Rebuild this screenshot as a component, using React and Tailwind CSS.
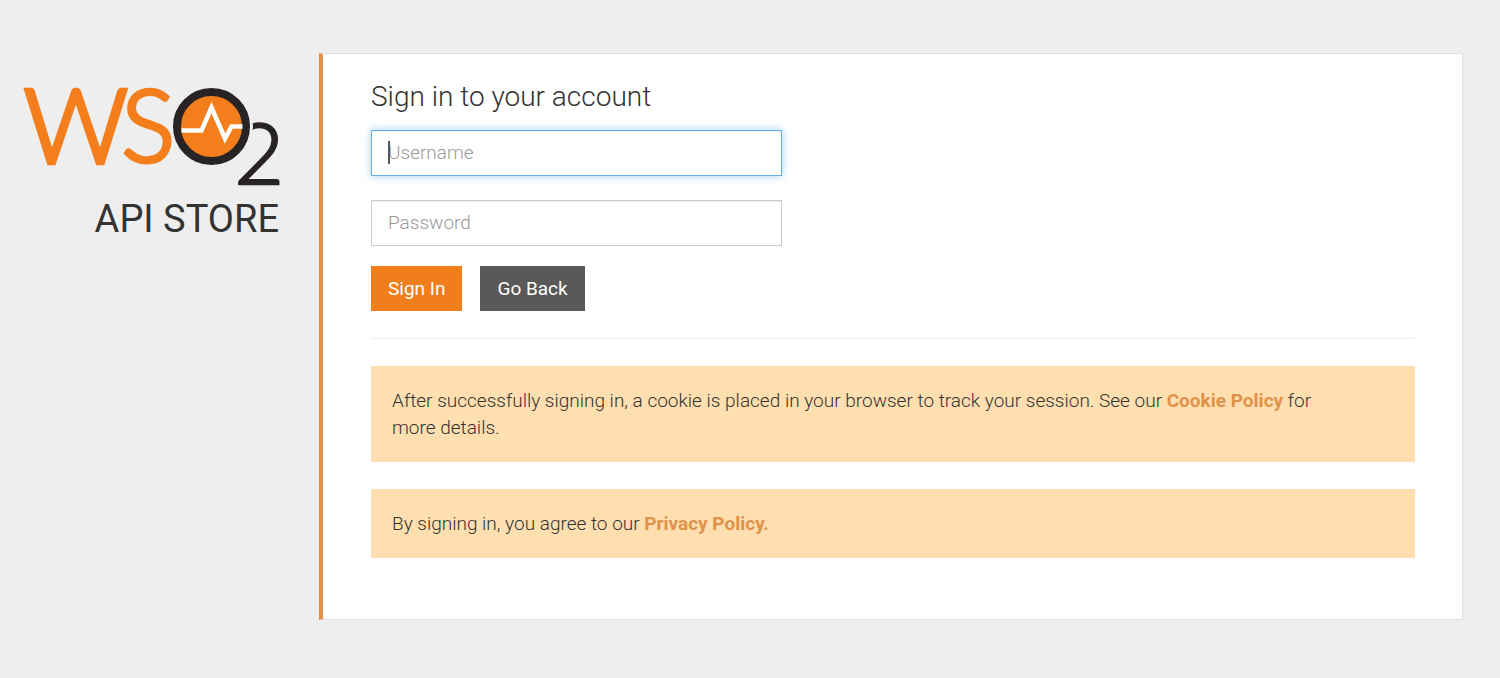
function Logo() {
  return (
    <svg viewBox="0 0 256 100" className="block w-full overflow-visible" role="img" aria-label="WSO2">
      <g fontFamily="Lato, sans-serif" fontWeight="300" strokeLinejoin="miter" strokeMiterlimit="2">
        <text x="211.500" y="96" fontSize="85" fill="#282425" stroke="#282425" strokeWidth="2.500">2</text>
        <circle cx="188.500" cy="38.500" r="41.500" fill="#eee" />
        <text x="1" y="74.500" fontSize="102" fill="#f47e1b" stroke="#f47e1b" strokeWidth="4.500">W</text>
        <text x="98.500" y="74" fontSize="100" fill="#f47e1b" stroke="#f47e1b" strokeWidth="4">S</text>
      </g>
      <circle cx="188.500" cy="38.500" r="34.500" fill="#f47e1b" stroke="#282425" strokeWidth="8" />
      <path d="M158.500 42.500H178.500L188.500 19.500L202 50.500L208.500 38.500H219.500" fill="none" stroke="#fff" strokeWidth="4.500" strokeMiterlimit="10" />
    </svg>
  );
}

function Notice({ children }) {
  return (
    <div className="bg-[#ffdfb0] py-[21px] pl-[21px] pr-[72px] leading-[27px]">
      <p>{children}</p>
    </div>
  );
}

const field =
  "block h-[46px] w-full border bg-white px-4 pb-0.5 text-[#555] placeholder:text-[#999] outline-none";

export default function App() {
  return (
    <div className="flex min-h-screen items-start gap-10 bg-[#eee] pt-[53px] pr-[37px] pb-[58px] pl-[23px] font-['Roboto',sans-serif] text-[19px] font-light text-[#333]">
      <header className="w-64 shrink-0 pt-[35px] text-right">
        <Logo />
        <h1 className="mt-2 text-[38px] leading-[46px] font-normal">API STORE</h1>
      </header>

      <main className="min-w-0 flex-1 border border-l-4 border-[#e0e0e0] border-l-[#e0914a] bg-white pt-6 pr-[47px] pb-[61px] pl-12">
        <h2 className="text-[28px] leading-[38px]">Sign in to your account</h2>

        <form className="mt-[14px]" onSubmit={(e) => e.preventDefault()}>
          <div className="flex max-w-[411px] flex-col gap-6">
            <div className="relative">
              <input
                type="text"
                aria-label="Username"
                placeholder="Username"
                autoFocus
                className={`${field} caret-transparent border-[#66afe9] shadow-[inset_0_1px_1px_rgba(0,0,0,0.075),0_0_8px_rgba(102,175,233,0.6)]`}
              />
              <span aria-hidden="true" className="absolute top-[11px] left-[17px] h-[23px] w-0.5 bg-[#555]" />
            </div>
            <input
              type="password"
              aria-label="Password"
              placeholder="Password"
              className={`${field} border-[#ccc] shadow-[inset_0_1px_1px_rgba(0,0,0,0.075)]`}
            />
          </div>
          <div className="mt-5 flex gap-[18px] leading-[27px] font-normal text-white">
            <button type="submit" className="h-[45px] bg-[#f07e1b] px-[17px]">Sign In</button>
            <button type="button" className="h-[45px] bg-[#595959] px-[17px]">Go Back</button>
          </div>
        </form>

        <hr className="my-[27px] border-[#eee]" />

        <div className="flex flex-col gap-[27px]">
          <Notice>
            After successfully signing in, a cookie is placed in your browser to track your session. See our{" "}
            <a href="#cookie-policy" className="font-bold text-[#e0914a]">Cookie Policy</a> for more details.
          </Notice>
          <Notice>
            By signing in, you agree to our{" "}
            <a href="#privacy-policy" className="font-bold text-[#e0914a]">Privacy Policy.</a>
          </Notice>
        </div>
      </main>
    </div>
  );
}
